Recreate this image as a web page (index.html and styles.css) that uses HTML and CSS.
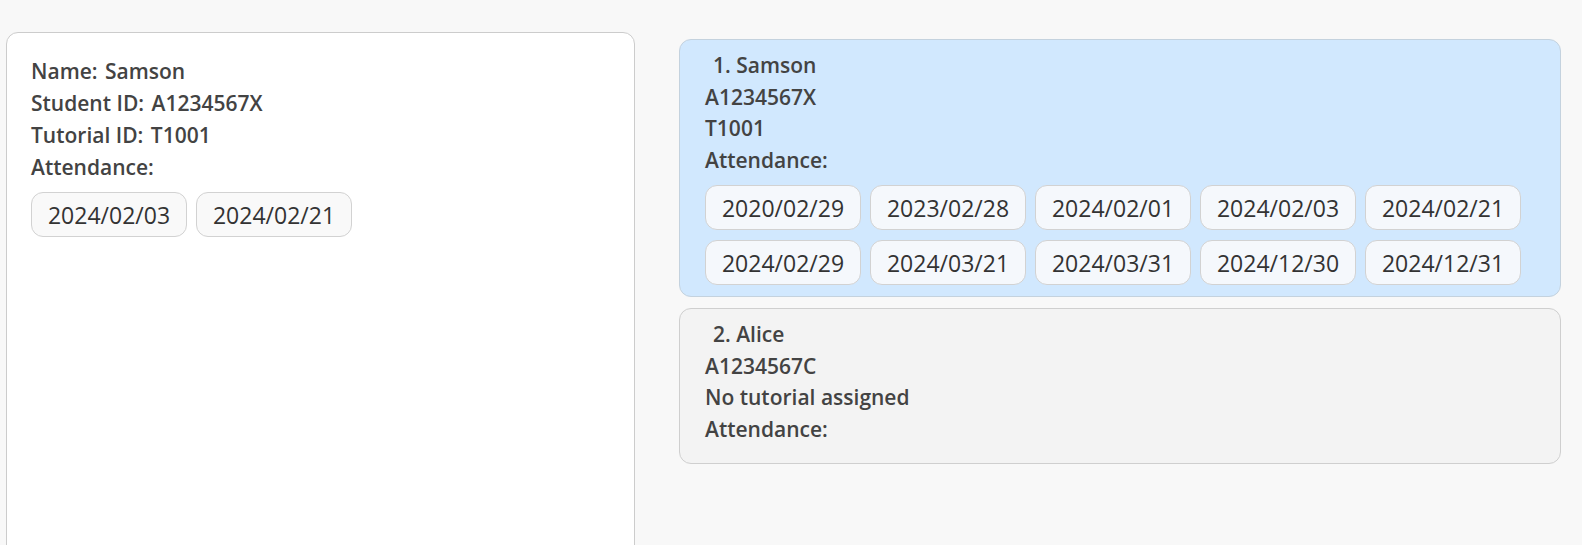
FILE: index.html
```html
<!DOCTYPE html>
<html lang="en">
<head>
<meta charset="utf-8">
<title>Students</title>
<link rel="stylesheet" href="styles.css">
</head>
<body>
<div class="app">
  <section class="detail">
    <div class="line"><span class="key">Name:</span> <span>Samson</span></div>
    <div class="line"><span class="key">Student ID:</span> <span>A1234567X</span></div>
    <div class="line"><span class="key">Tutorial ID:</span> <span>T1001</span></div>
    <div class="line">Attendance:</div>
    <div class="chips">
      <span class="chip">2024/02/03</span>
      <span class="chip">2024/02/21</span>
    </div>
  </section>
  <section class="list">
    <div class="card selected">
      <div class="line name">1. Samson</div>
      <div class="line">A1234567X</div>
      <div class="line">T1001</div>
      <div class="line">Attendance:</div>
      <div class="chips">
        <span class="chip">2020/02/29</span>
        <span class="chip">2023/02/28</span>
        <span class="chip">2024/02/01</span>
        <span class="chip">2024/02/03</span>
        <span class="chip">2024/02/21</span>
        <span class="chip">2024/02/29</span>
        <span class="chip">2024/03/21</span>
        <span class="chip">2024/03/31</span>
        <span class="chip">2024/12/30</span>
        <span class="chip">2024/12/31</span>
      </div>
    </div>
    <div class="card">
      <div class="line name">2. Alice</div>
      <div class="line">A1234567C</div>
      <div class="line">No tutorial assigned</div>
      <div class="line">Attendance:</div>
      <div class="chips empty"></div>
    </div>
  </section>
</div>
</body>
</html>
```

FILE: styles.css
```css
html, body {
  margin: 0;
  padding: 0;
  height: 545px;
  overflow: hidden;
  background: #f8f8f8;
  font-family: "Open Sans", "Noto Sans", sans-serif;
  color: #434343;
}

.app {
  display: flex;
  align-items: flex-start;
  gap: 44px;
  padding: 32px 21px 0 6px;
}

.detail {
  box-sizing: border-box;
  width: 629px;
  height: 560px;
  background: #ffffff;
  border: 1px solid #cccccc;
  border-radius: 12px;
  padding: 22px 24px;
}

.line {
  font-size: 21px;
  font-weight: 600;
  line-height: 32px;
  white-space: nowrap;
}

.key {
  margin-right: 2px;
}

.chips {
  display: flex;
  flex-wrap: wrap;
  gap: 10px 9px;
  margin-top: 9px;
}

.chip {
  box-sizing: border-box;
  display: inline-flex;
  align-items: center;
  justify-content: center;
  min-width: 156px;
  height: 45px;
  padding: 0 14px;
  font-size: 23px;
  font-weight: 400;
  color: #333333;
  background: #f9f9f9;
  border: 1px solid #d2d2d2;
  border-radius: 12px;
}

.list {
  display: flex;
  flex-direction: column;
  gap: 11px;
  width: 882px;
  margin-top: 7px;
}

.card {
  box-sizing: border-box;
  background: #f3f3f3;
  border: 1px solid #cfcfcf;
  border-radius: 12px;
  padding: 10px 24px 11px 25px;
}

.card .line {
  line-height: 31.5px;
}

.card .name {
  padding-left: 8px;
}

.card.selected {
  background: #d1e8fe;
  border-color: #c4d2de;
}

.card.selected .chip {
  background: #f5f8fc;
}

.chips.empty {
  margin-top: 0;
  height: 7px;
}
```
